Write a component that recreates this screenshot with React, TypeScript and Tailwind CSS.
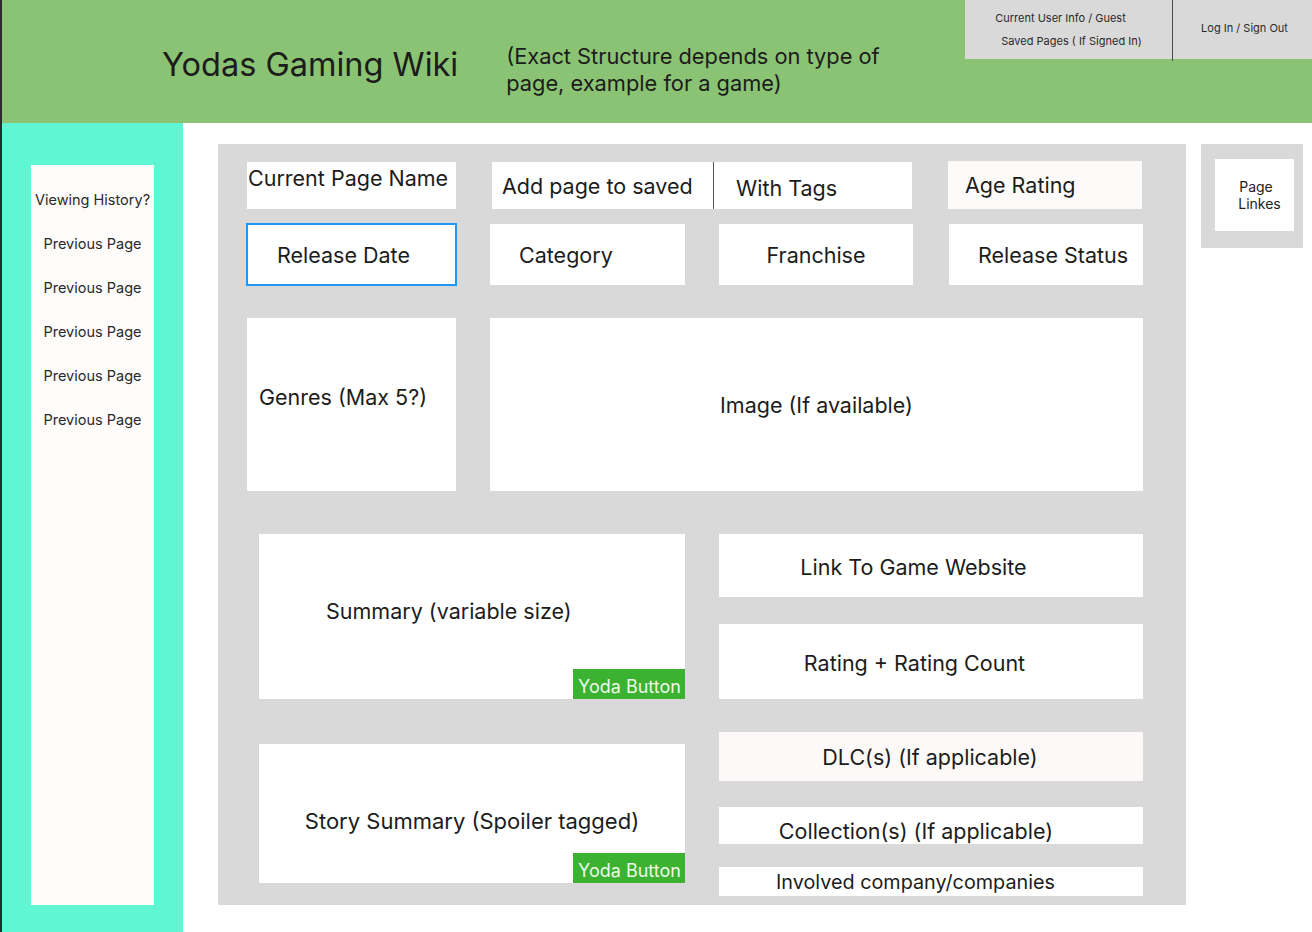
import React from "react";

const Box = ({ className, children }: { className: string; children?: React.ReactNode }) => (
  <div className={className}>{children}</div>
);

export default function App() {
  const history = ["Viewing History?", "Previous Page", "Previous Page", "Previous Page", "Previous Page", "Previous Page"];
  return (
    <div className="w-[1312px] h-[932px] overflow-hidden flex flex-col border-l-2 border-[#2b2b2b] bg-white font-['Inter','Noto_Sans',sans-serif] text-[#1c1c1c]">
      {/* Header */}
      <div className="h-[123px] shrink-0 bg-[#8ac373] flex items-start">
        <div className="ml-[160px] pt-[45px] text-[32.5px] leading-[40px] whitespace-nowrap">Yodas Gaming Wiki</div>
        <div className="ml-[48px] pt-[43px] text-[21.8px] leading-[27px] whitespace-nowrap">
          <div>(Exact Structure depends on type of</div>
          <div>page, example for a game)</div>
        </div>
        <div className="flex-1" />
        <div className="w-[347px] h-[59px] bg-[#d9d9d9] flex items-start text-[11px] leading-[14px] text-[#2a2a2a]">
          <div className="w-[207px] h-[59px] flex flex-col items-center pt-[11px]">
            <div className="pr-[16px]">Current User Info / Guest</div>
            <div className="pl-[6px] mt-[9px]">Saved Pages ( If Signed In)</div>
          </div>
          <div className="w-px h-[61px] bg-[#4a4a4a]" />
          <div className="flex-1 h-[59px] flex items-start justify-center pt-[21px] pl-[4px]">Log In / Sign Out</div>
        </div>
      </div>

      {/* Body */}
      <div className="flex flex-1 items-start">
        {/* Sidebar */}
        <div className="w-[181px] h-[809px] bg-[#5ef6d3] pl-[29px] pt-[42px]">
          <div className="w-[123px] h-[740px] bg-[#fdfcfb] pt-[13px] flex flex-col items-center text-[14.5px] text-[#2a2a2a]">
            {history.map((h, i) => (
              <div key={i} className="h-[44px] flex items-center whitespace-nowrap">{h}</div>
            ))}
          </div>
        </div>

        {/* Main panel */}
        <div className="ml-[35px] mt-[21px] w-[968px] h-[761px] bg-[#d9d9d9] flex flex-col text-[21.5px] leading-[28px]">
          {/* Row 1 */}
          <div className="flex items-start mt-[17px]">
            <Box className="ml-[29px] mt-[1px] w-[209px] h-[47px] bg-white pl-[1px] pt-[2px] whitespace-nowrap">Current Page Name</Box>
            <Box className="ml-[36px] mt-[1px] w-[221px] h-[47px] bg-white pl-[10px] flex items-center whitespace-nowrap">Add page to saved</Box>
            <div className="mt-[1px] w-px h-[47px] bg-[#555]" />
            <Box className="mt-[1px] w-[198px] h-[47px] bg-white pl-[22px] pt-[5px] flex items-center whitespace-nowrap">With Tags</Box>
            <Box className="ml-[36px] w-[194px] h-[48px] bg-[#fcfbf9] pl-[17px] flex items-center whitespace-nowrap">Age Rating</Box>
          </div>
          {/* Row 2 */}
          <div className="flex items-start mt-[14px]">
            <Box className="ml-[28px] w-[211px] h-[63px] bg-white border-2 border-[#2196f3] pl-[29px] flex items-center whitespace-nowrap">Release Date</Box>
            <Box className="ml-[33px] mt-[1px] w-[195px] h-[61px] bg-white pl-[29px] flex items-center whitespace-nowrap">Category</Box>
            <Box className="ml-[34px] mt-[1px] w-[194px] h-[61px] bg-white flex items-center justify-center whitespace-nowrap">Franchise</Box>
            <Box className="ml-[36px] mt-[1px] w-[194px] h-[61px] bg-white pl-[29px] flex items-center whitespace-nowrap">Release Status</Box>
          </div>
          {/* Row 3 */}
          <div className="flex items-start mt-[32px]">
            <Box className="ml-[29px] w-[209px] h-[173px] bg-white pl-[12px] pt-[65px] whitespace-nowrap">Genres (Max 5?)</Box>
            <Box className="ml-[34px] w-[653px] h-[173px] bg-white flex items-center justify-center pt-[1px] whitespace-nowrap">Image (If available)</Box>
          </div>
          {/* Bottom */}
          <div className="flex items-start mt-[43px]">
            <div className="ml-[41px] w-[426px] flex flex-col">
              <div className="h-[165px] bg-white flex flex-col">
                <div className="flex-1 flex items-center pl-[67px] pt-[18px] whitespace-nowrap">Summary (variable size)</div>
                <div className="self-end w-[112px] h-[30px] bg-[#3bb231] text-[#eef8e8] text-[18px] leading-[30px] pt-[3px] pl-[1px] text-center whitespace-nowrap">Yoda Button</div>
              </div>
              <div className="mt-[45px] h-[139px] bg-white flex flex-col">
                <div className="flex-1 flex items-center justify-center pt-[44px] text-[22px] whitespace-nowrap">Story Summary (Spoiler tagged)</div>
                <div className="self-end w-[112px] h-[30px] bg-[#3bb231] text-[#eef8e8] text-[18px] leading-[30px] pt-[3px] pl-[1px] text-center whitespace-nowrap">Yoda Button</div>
              </div>
            </div>
            <div className="ml-[34px] w-[424px] flex flex-col">
              <Box className="h-[63px] bg-white flex items-center justify-center pr-[35px] pt-[2px] whitespace-nowrap">Link To Game Website</Box>
              <Box className="mt-[27px] h-[75px] bg-white flex items-center justify-center pr-[33px] pt-[2px] whitespace-nowrap">Rating + Rating Count</Box>
              <Box className="mt-[33px] h-[49px] bg-[#fdf9f8] flex items-center justify-center pr-[2px] whitespace-nowrap">DLC(s) (If applicable)</Box>
              <Box className="mt-[26px] h-[37px] bg-white flex items-center justify-center pr-[30px] pt-[11px] whitespace-nowrap">Collection(s) (If applicable)</Box>
              <Box className="mt-[23px] h-[29px] bg-white flex items-center justify-center pr-[31px] pt-[1px] text-[19.8px] whitespace-nowrap">Involved company/companies</Box>
            </div>
          </div>
        </div>

        {/* Page links */}
        <div className="ml-[15px] mt-[21px] w-[102px] h-[104px] bg-[#d9d9d9] pl-[14px] pt-[15px]">
          <div className="w-[79px] h-[72px] bg-white flex flex-col items-center justify-center text-[14px] leading-[17px] text-[#222]">
            <div className="pl-[3px]">Page</div>
            <div className="pl-[10px]">Linkes</div>
          </div>
        </div>
      </div>
    </div>
  );
}
